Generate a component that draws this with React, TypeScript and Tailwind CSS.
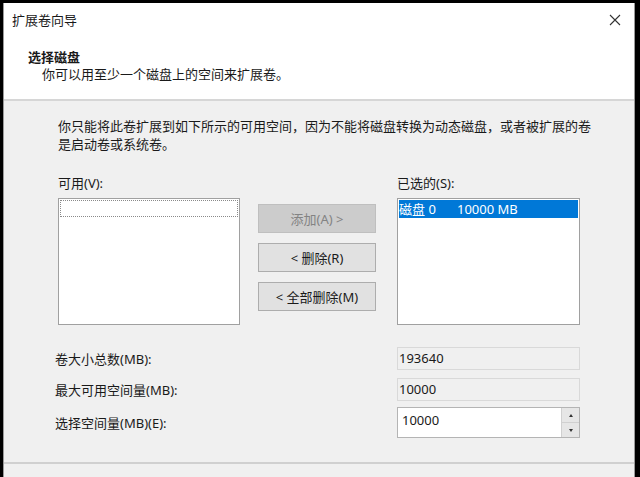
import React from "react";

const font = { fontFamily: '"Noto Sans", "Noto Sans CJK SC", sans-serif' };

const Button = ({ label, disabled }: { label: string; disabled?: boolean }) => (
  <div
    className={`h-[29px] w-[118px] flex items-center justify-center border text-[13px] ${
      disabled
        ? "bg-[#cccccc] border-[#bfbfbf] text-[#838383]"
        : "bg-[#e1e1e1] border-[#adadad] text-[#1a1a1a]"
    }`}
  >
    {label}
  </div>
);

const App = () => {
  return (
    <div
      className="w-[640px] h-[477px] bg-black pt-[3px] pl-[3px] pr-[5px] overflow-hidden text-[#1a1a1a] leading-[18px]"
      style={font}
    >
      <div className="h-full border-x border-[#9a9a9a] bg-[#f0f0f0] flex flex-col">
        {/* Title + header */}
        <div className="bg-white">
          <div className="h-[34px] flex items-center justify-between pl-[8px] pr-[12px]">
            <span className="text-[13px]">扩展卷向导</span>
            <svg width="12" height="12" viewBox="0 0 12 12" className="mr-[1px]">
              <path d="M1 1 L11 11 M11 1 L1 11" stroke="#333" strokeWidth="1.1" fill="none" />
            </svg>
          </div>
          <div className="pt-[12px] pb-[16px] pl-[24px] leading-[17px]">
            <div className="text-[13px] font-bold">选择磁盘</div>
            <div className="text-[13px] pl-[14px]">你可以用至少一个磁盘上的空间来扩展卷。</div>
          </div>
        </div>
        <div className="h-[2px] bg-[#d6d6d6]" />

        {/* Content */}
        <div className="pl-[54px] pt-[16px] text-[13px]">
          <p className="leading-[18px] w-[540px]">
            你只能将此卷扩展到如下所示的可用空间，因为不能将磁盘转换为动态磁盘，或者被扩展的卷是启动卷或系统卷。
          </p>

          <div className="flex mt-[21px]">
            <div className="flex flex-col">
              <div className="h-[18px]">可用(V):</div>
              <div className="mt-[6px] w-[182px] h-[127px] bg-white border border-[#a0a0a0] p-[1px]">
                <div className="h-[17px] border border-dotted border-[#8a8a8a]" />
              </div>
            </div>

            <div className="flex flex-col gap-[10px] ml-[18px] mt-[30px]">
              <Button label="添加(A) >" disabled />
              <Button label="< 删除(R)" />
              <Button label="< 全部删除(M)" />
            </div>

            <div className="flex flex-col ml-[21px]">
              <div className="h-[18px]">已选的(S):</div>
              <div className="mt-[6px] w-[183px] h-[127px] bg-white border border-[#a0a0a0] p-[1px]">
                <div className="h-[18px] bg-[#0078d7] text-white flex items-center">
                  <span className="w-[58px]">磁盘 0</span>
                  <span>10000 MB</span>
                </div>
              </div>
            </div>
          </div>

          <div className="mt-[22px] flex flex-col">
            <div className="flex items-center h-[23px]">
              <span className="w-[342px] -ml-[3px]">卷大小总数(MB):</span>
              <div className="w-[183px] h-[23px] border border-[#d9d9d9] bg-[#f0f0f0] flex items-center pl-[1px] pb-[2px]">
                193640
              </div>
            </div>
            <div className="flex items-center h-[23px] mt-[8px]">
              <span className="w-[342px] -ml-[3px]">最大可用空间量(MB):</span>
              <div className="w-[183px] h-[23px] border border-[#d9d9d9] bg-[#f0f0f0] flex items-center pl-[1px] pb-[2px]">
                10000
              </div>
            </div>
            <div className="flex items-center h-[31px] mt-[6px]">
              <span className="w-[342px] -ml-[3px]">选择空间量(MB)(E):</span>
              <div className="w-[183px] h-[31px] border border-[#b4b4b4] bg-white flex">
                <div className="flex-1 pl-[4px] pt-[3px]">10000</div>
                <div className="w-[18px] flex flex-col border-l border-[#d0d0d0]">
                  <div className="flex-1 bg-[#e6e6e6] border-b border-[#d0d0d0] flex items-center justify-center">
                    <div className="w-0 h-0 border-x-[2px] border-x-transparent border-b-[3px] border-b-[#333]" />
                  </div>
                  <div className="flex-1 bg-[#e6e6e6] flex items-center justify-center">
                    <div className="w-0 h-0 border-x-[2px] border-x-transparent border-t-[3px] border-t-[#333]" />
                  </div>
                </div>
              </div>
            </div>
          </div>
        </div>

        <div className="mt-[24px] h-[2px] bg-[#d0d0d0]" />
      </div>
    </div>
  );
};

export default App;
